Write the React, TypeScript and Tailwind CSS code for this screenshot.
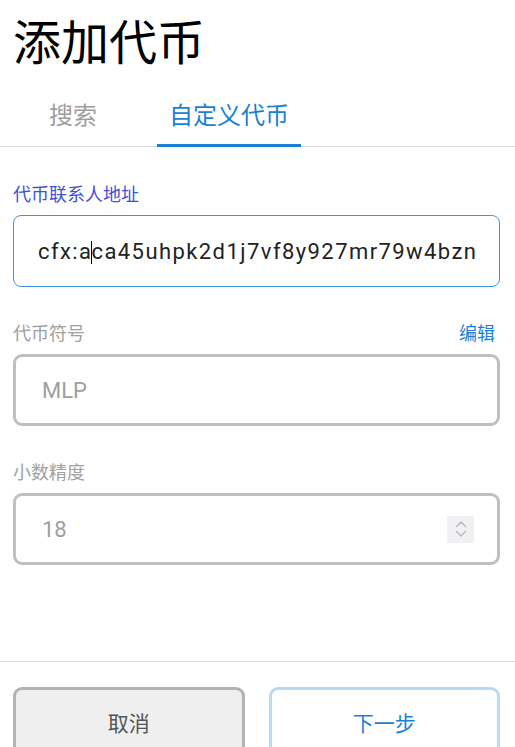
import React, { useState } from 'react'

const Label = ({ children, color }: { children: React.ReactNode; color: string }) => (
  <div className={`text-[18px] leading-[18px] ${color}`}>{children}</div>
)

const App = () => {
  const [tab, setTab] = useState<'search' | 'custom'>('custom')

  return (
    <div className="w-[515px] h-[747px] overflow-hidden bg-white font-['Noto_Sans_CJK_SC',sans-serif]">
      <h1 className="pl-[13px] pt-[15px] text-[48px] leading-[48px] text-black font-normal">添加代币</h1>

      {/* tabs */}
      <div className="mt-[22px] flex gap-3 pl-px border-b border-[#d6dce4]">
        <button
          onClick={() => setTab('search')}
          className={`w-[144px] pt-[17px] pb-[18px] text-[24px] leading-[24px] border-b-[3px] -mb-px ${tab === 'search' ? 'text-[#1a7fd6] border-[#1a7fd6]' : 'text-[#9e9e9e] border-transparent'}`}
        >
          搜索
        </button>
        <button
          onClick={() => setTab('custom')}
          className={`w-[144px] pt-[17px] pb-[18px] text-[24px] leading-[24px] border-b-[3px] -mb-px ${tab === 'custom' ? 'text-[#1a7fd6] border-[#1a7fd6]' : 'text-[#9e9e9e] border-transparent'}`}
        >
          自定义代币
        </button>
      </div>

      <div className="pl-[13px] pr-[15px] flex flex-col">
        <div className="mt-[37px]">
          <Label color="text-[#4051d6]">代币联系人地址</Label>
        </div>
        <div className="mt-[13px] h-[72px] rounded-[8px] border border-[#3b94e0] flex items-center pl-[24px]">
          <span className="font-['Roboto',sans-serif] text-[22px] text-[#222] tracking-[1.42px] whitespace-nowrap">
            cfx:a<span className="inline-block w-px h-[23px] bg-black align-middle -mx-px"></span>ca45uhpk2d1j7vf8y927mr79w4bzn
          </span>
        </div>

        <div className="mt-[36px] flex justify-between items-center">
          <Label color="text-[#a0a0a0]">代币符号</Label>
          <span className="text-[18px] leading-[18px] text-[#1a7fd6] mr-[5px]">编辑</span>
        </div>
        <div className="mt-[13px] h-[72px] rounded-[9px] border-[3px] border-[#bcc0c5] flex items-center pl-[26px]">
          <span className="font-['Roboto',sans-serif] text-[22px] text-[#9e9e9e]">MLP</span>
        </div>

        <div className="mt-[36px]">
          <Label color="text-[#a0a0a0]">小数精度</Label>
        </div>
        <div className="mt-[13px] h-[72px] rounded-[9px] border-[3px] border-[#bcc0c5] flex items-center justify-between pl-[26px] pr-[23px]">
          <span className="font-['Roboto',sans-serif] text-[22px] text-[#9e9e9e]">18</span>
          <div className="w-[27px] h-[27px] bg-[#f1f1f4] flex items-center justify-center">
            <svg width="14" height="20" viewBox="0 0 14 20" fill="none" stroke="#bdbdc6" strokeWidth="1.6" strokeLinecap="round" strokeLinejoin="round">
              <path d="M2.5 7.5 L7 3 L11.5 7.5" />
              <path d="M2.5 12.5 L7 17 L11.5 12.5" />
            </svg>
          </div>
        </div>
      </div>

      {/* footer */}
      <div className="mt-[96px] border-t border-[#d6dce4] pt-[25px] pl-[13px] pr-[15px] flex gap-[24px]">
        <button className="flex-1 h-[80px] rounded-[9px] border-[3px] border-[#b3b3b3] bg-[#efefef] text-[21px] text-[#555] pb-[8px]">
          取消
        </button>
        <button className="flex-1 h-[80px] rounded-[9px] border-[3px] border-[#b8daf3] bg-white text-[21px] text-[#1a7fd6] pb-[8px]">
          下一步
        </button>
      </div>
    </div>
  )
}

export default App
